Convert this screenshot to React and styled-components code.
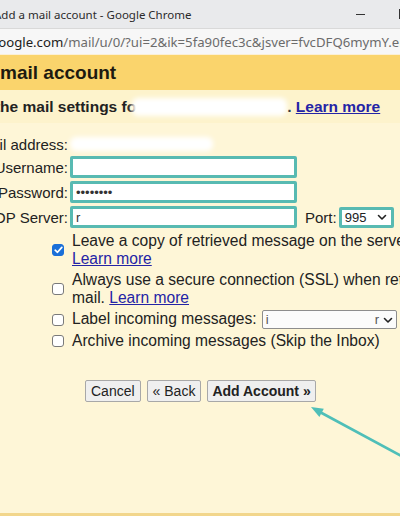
import React from "react";
import styled, { createGlobalStyle } from "styled-components";

const GlobalStyle = createGlobalStyle`
  html, body { margin: 0; padding: 0; overflow: hidden; background: #fef6d7; }
  #root { width: 400px; height: 516px; }
`;

const Window = styled.div`
  position: relative;
  width: 400px;
  height: 516px;
  display: flex;
  flex-direction: column;
  overflow: hidden;
  font-family: "Liberation Sans", Arial, sans-serif;
`;

const TitleBar = styled.div`
  height: 28px;
  flex: none;
  background: #e9eaec;
  display: flex;
  align-items: center;
  justify-content: space-between;
  font-family: "Noto Sans", sans-serif;
  font-size: 11.5px;
  color: #2b2b2b;
  overflow: hidden;
`;

const Title = styled.span`
  margin-left: -6px;
  white-space: nowrap;
`;

const Controls = styled.div`
  display: flex;
  align-items: center;
  gap: 34px;
  margin-right: -10px;
`;

const MinDash = styled.span`
  width: 9px;
  height: 1px;
  background: #333;
`;

const MaxBox = styled.span`
  width: 9px;
  height: 8px;
  border: 1px solid #333;
`;

const AddressBar = styled.div`
  height: 26px;
  flex: none;
  background: #f7f7f7;
  border-top: 1px solid #d9d9d9;
  display: flex;
  align-items: center;
  padding-top: 1px;
  box-sizing: border-box;
  font-family: "Noto Sans", sans-serif;
  font-size: 13.2px;
  white-space: nowrap;
  overflow: hidden;
`;

const Url = styled.span`
  margin-left: -40px;
  color: #6b6b6b;
`;

const Host = styled.span`
  color: #202020;
`;

const Page = styled.div`
  flex: 1;
  display: flex;
  flex-direction: column;
  background: #fef6d7;
  color: #222;
  border-top: 1px solid #fbf0d6;
`;

const Header = styled.div`
  height: 35px;
  flex: none;
  background: #fad46c;
  display: flex;
  align-items: center;
  font-size: 19px;
  font-weight: bold;
  color: #1d1a10;
  white-space: nowrap;
  overflow: hidden;
`;

const HeaderText = styled.span`
  margin-left: -58px;
`;

const Intro = styled.div`
  height: 33px;
  flex: none;
  background: #fdf3cc;
  display: flex;
  align-items: center;
  font-size: 15.5px;
  font-weight: bold;
  white-space: nowrap;
  overflow: hidden;
`;

const IntroText = styled.span`
  margin-left: -49px;
  display: flex;
  align-items: center;
`;

const Redact = styled.span`
  display: inline-block;
  width: ${(p) => p.$w}px;
  height: ${(p) => p.$h}px;
  margin-left: ${(p) => p.$ml || 0}px;
  background: #ffffff;
  filter: blur(2.5px);
  border-radius: 6px;
`;

const Link = styled.a`
  color: #2424a6;
  text-decoration: underline;
  cursor: pointer;
`;

const Form = styled.div`
  display: grid;
  grid-template-columns: 68px auto;
  column-gap: 2px;
  row-gap: 3px;
  padding-top: 12px;
  font-size: 15px;
`;

const Label = styled.div`
  display: flex;
  justify-content: flex-end;
  align-items: center;
  white-space: nowrap;
  height: ${(p) => p.$h || 22}px;
`;

const Cell = styled.div`
  display: flex;
  align-items: center;
  gap: 8px;
  height: ${(p) => p.$h || 22}px;
  white-space: nowrap;
`;

const Field = styled.input`
  box-sizing: border-box;
  width: 227px;
  height: 22px;
  border: 3px solid #58bab2;
  border-radius: 2px;
  background: #fff;
  padding: 0 3px;
  font-family: "Liberation Sans", Arial, sans-serif;
  font-size: 13px;
  color: #333;
  outline: none;
`;

const PortLabel = styled.span`
  margin-right: -6px;
`;

const PortSelect = styled.div`
  box-sizing: border-box;
  width: 55px;
  height: 21px;
  border: 3px solid #58bab2;
  border-radius: 2px;
  background: #fff;
  display: flex;
  align-items: center;
  justify-content: space-between;
  padding: 0 4px 0 3px;
  font-size: 13px;
  color: #222;
`;

const Checks = styled.div`
  display: flex;
  flex-direction: column;
  gap: 3px;
  padding: 4px 0 0 52px;
  font-size: 15.6px;
  line-height: 18px;
`;

const CheckRow = styled.div`
  display: flex;
  align-items: center;
  gap: 8px;
  white-space: nowrap;
`;

const Box = styled.span`
  flex: none;
  box-sizing: border-box;
  width: 12px;
  height: 12px;
  border-radius: 3px;
  border: 1px solid ${(p) => (p.$on ? "#1a6fd8" : "#7a7a7a")};
  background: ${(p) => (p.$on ? "#1a6fd8" : "#ffffff")};
  display: flex;
  align-items: center;
  justify-content: center;
`;

const CheckText = styled.div`
  display: flex;
  flex-direction: column;
`;

const LabelSelect = styled.span`
  box-sizing: border-box;
  display: inline-flex;
  align-items: center;
  justify-content: space-between;
  width: 135px;
  height: 19px;
  margin-left: 5px;
  border: 1px solid #8d8d8d;
  border-radius: 2px;
  background: #fbfbfb;
  padding: 0 3px 0 3px;
  vertical-align: middle;
  font-size: 13px;
  color: #555;
`;

const Buttons = styled.div`
  display: flex;
  gap: 6px;
  padding: 30px 0 0 85px;
`;

const Button = styled.button`
  box-sizing: border-box;
  height: 22px;
  padding: 0 ${(p) => (p.$primary ? 4 : 5)}px;
  border: 1px solid #a8a8a8;
  border-radius: 2px;
  background: #efefef;
  font-family: "Liberation Sans", Arial, sans-serif;
  font-size: 14px;
  font-weight: ${(p) => (p.$primary ? "bold" : "normal")};
  color: #222;
`;

const Spacer = styled.div`
  flex: 1;
`;

const BottomBar = styled.div`
  height: 3px;
  flex: none;
  background: #f2d68c;
`;

const Overlay = styled.svg`
  position: absolute;
  left: 0;
  top: 0;
  pointer-events: none;
`;

const Chevron = () => (
  <svg width="10" height="7" viewBox="0 0 10 7">
    <path d="M1.5 1.5 L5 5 L8.5 1.5" fill="none" stroke="#222" strokeWidth="1.6" strokeLinecap="round" strokeLinejoin="round" />
  </svg>
);

const Check = () => (
  <svg width="9" height="8" viewBox="0 0 9 8">
    <path d="M1.2 4.2 L3.5 6.3 L7.8 1.4" fill="none" stroke="#fff" strokeWidth="1.7" strokeLinecap="round" strokeLinejoin="round" />
  </svg>
);

export default function App() {
  return (
    <>
      <GlobalStyle />
      <Window>
        <TitleBar>
          <Title>Add a mail account - Google Chrome</Title>
          <Controls>
            <MinDash />
            <MaxBox />
          </Controls>
        </TitleBar>
        <AddressBar>
          <Url>
            <Host>mail.google.com</Host>/mail/u/0/?ui=2&amp;ik=5fa90fec3c&amp;jsver=fvcDFQ6mymY.en.
          </Url>
        </AddressBar>
        <Page>
          <Header>
            <HeaderText>Add a mail account</HeaderText>
          </Header>
          <Intro>
            <IntroText>
              Enter the mail settings fo
              <Redact $w={155} $h={18} $ml={-4} />
              .&nbsp;<Link>Learn more</Link>
            </IntroText>
          </Intro>
          <Form>
            <Label $h={18}>Email address:</Label>
            <Cell $h={18}>
              <Redact $w={143} $h={14} />
            </Cell>
            <Label>Username:</Label>
            <Cell>
              <Field readOnly defaultValue="" />
            </Cell>
            <Label>Password:</Label>
            <Cell>
              <Field type="password" readOnly defaultValue="12345678" />
            </Cell>
            <Label>POP Server:</Label>
            <Cell>
              <Field readOnly defaultValue="r" />
              <PortLabel>Port:</PortLabel>
              <PortSelect>
                995
                <Chevron />
              </PortSelect>
            </Cell>
          </Form>
          <Checks>
            <CheckRow>
              <Box $on>
                <Check />
              </Box>
              <CheckText>
                <span>Leave a copy of retrieved message on the server.</span>
                <span>
                  <Link>Learn more</Link>
                </span>
              </CheckText>
            </CheckRow>
            <CheckRow>
              <Box />
              <CheckText>
                <span>Always use a secure connection (SSL) when retrieving</span>
                <span>
                  mail. <Link>Learn more</Link>
                </span>
              </CheckText>
            </CheckRow>
            <CheckRow>
              <Box />
              <CheckText>
                <span>
                  Label incoming messages:
                  <LabelSelect>
                    <span>i</span>
                    <span>
                      r <Chevron />
                    </span>
                  </LabelSelect>
                </span>
              </CheckText>
            </CheckRow>
            <CheckRow>
              <Box />
              <CheckText>
                <span>Archive incoming messages (Skip the Inbox)</span>
              </CheckText>
            </CheckRow>
          </Checks>
          <Buttons>
            <Button>Cancel</Button>
            <Button>« Back</Button>
            <Button $primary>Add Account »</Button>
          </Buttons>
          <Spacer />
          <BottomBar />
        </Page>
        <Overlay width="400" height="516" viewBox="0 0 400 516">
          <line x1="405" y1="458" x2="318" y2="411" stroke="#4fbfb8" strokeWidth="2.6" strokeLinecap="round" />
          <polygon points="311,407 323.8,408.8 319.4,417" fill="#4fbfb8" />
        </Overlay>
      </Window>
    </>
  );
}
